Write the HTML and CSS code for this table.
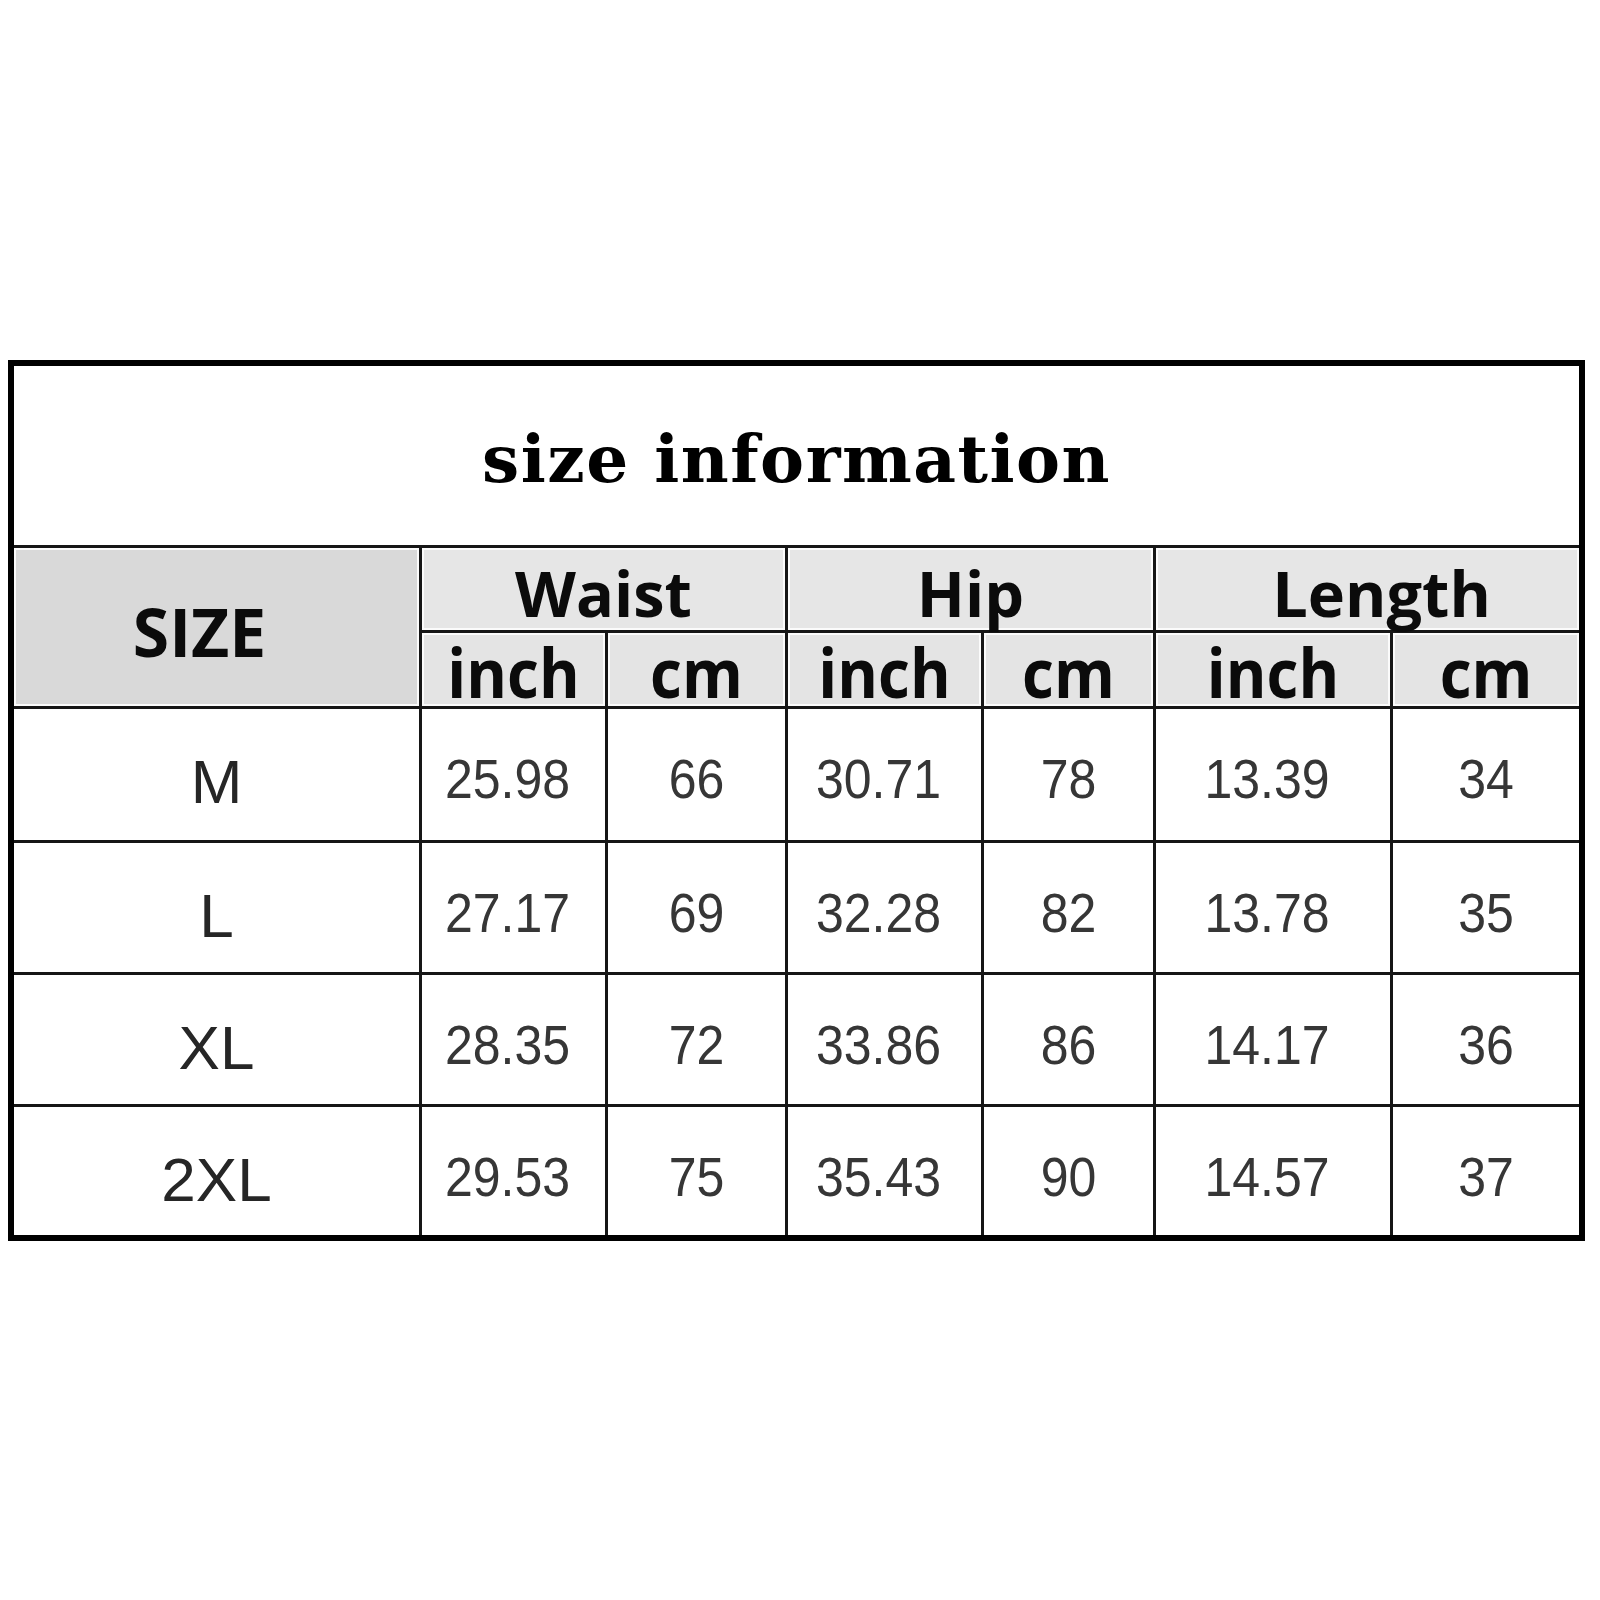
FILE: index.html
```html
<!DOCTYPE html>
<html lang="en">
<head>
<meta charset="utf-8">
<title>size information</title>
<link rel="stylesheet" href="styles.css">
</head>
<body>
<div class="page">
  <table class="chart">
    <colgroup>
      <col class="c-size">
      <col class="c-w-in">
      <col class="c-w-cm">
      <col class="c-h-in">
      <col class="c-h-cm">
      <col class="c-l-in">
      <col class="c-l-cm">
    </colgroup>
    <tr class="r-title">
      <td class="title last-col" colspan="7">size information</td>
    </tr>
    <tr class="r-head1">
      <td class="size-head" rowspan="2"><span class="hs">SIZE</span></td>
      <td class="group" colspan="2"><span class="hg">Waist</span></td>
      <td class="group" colspan="2"><span class="hg">Hip</span></td>
      <td class="group last-col" colspan="2"><span class="hg hg-len">Length</span></td>
    </tr>
    <tr class="r-head2">
      <td class="unit"><span class="hu">inch</span></td>
      <td class="unit"><span class="hu">cm</span></td>
      <td class="unit"><span class="hu">inch</span></td>
      <td class="unit"><span class="hu">cm</span></td>
      <td class="unit"><span class="hu">inch</span></td>
      <td class="unit last-col"><span class="hu">cm</span></td>
    </tr>
    <tr class="r-data r1">
      <td class="sz">M</td>
      <td class="num in"><span class="v">25.98</span></td>
      <td class="num"><span class="v">66</span></td>
      <td class="num in"><span class="v">30.71</span></td>
      <td class="num"><span class="v">78</span></td>
      <td class="num in"><span class="v">13.39</span></td>
      <td class="num last-col"><span class="v">34</span></td>
    </tr>
    <tr class="r-data r2">
      <td class="sz">L</td>
      <td class="num in"><span class="v">27.17</span></td>
      <td class="num"><span class="v">69</span></td>
      <td class="num in"><span class="v">32.28</span></td>
      <td class="num"><span class="v">82</span></td>
      <td class="num in"><span class="v">13.78</span></td>
      <td class="num last-col"><span class="v">35</span></td>
    </tr>
    <tr class="r-data r3">
      <td class="sz">XL</td>
      <td class="num in"><span class="v">28.35</span></td>
      <td class="num"><span class="v">72</span></td>
      <td class="num in"><span class="v">33.86</span></td>
      <td class="num"><span class="v">86</span></td>
      <td class="num in"><span class="v">14.17</span></td>
      <td class="num last-col"><span class="v">36</span></td>
    </tr>
    <tr class="r-data r4 last-row">
      <td class="sz">2XL</td>
      <td class="num in"><span class="v">29.53</span></td>
      <td class="num"><span class="v">75</span></td>
      <td class="num in"><span class="v">35.43</span></td>
      <td class="num"><span class="v">90</span></td>
      <td class="num in"><span class="v">14.57</span></td>
      <td class="num last-col"><span class="v">37</span></td>
    </tr>
  </table>
</div>
</body>
</html>
```

FILE: styles.css
```css
html, body {
  margin: 0;
  padding: 0;
  background: #ffffff;
}

.page {
  padding: 360px 0 0 8px;
}

.chart {
  border-collapse: separate;
  border-spacing: 0;
  border: 6px solid #000;
  table-layout: fixed;
  width: 1577px;
}

.c-size { width: 408px; }
.c-w-in { width: 186px; }
.c-w-cm { width: 180px; }
.c-h-in { width: 196px; }
.c-h-cm { width: 172px; }
.c-l-in { width: 237px; }
.c-l-cm { width: 186px; }

.chart td {
  padding: 0;
  border-right: 3px solid #161616;
  border-bottom: 3px solid #161616;
  text-align: center;
  vertical-align: top;
  line-height: 1;
}

.chart td.last-col { border-right: none; }
.chart tr.last-row td { border-bottom: none; }

.r-title { height: 182px; }
.r-head1 { height: 85px; }
.r-head2 { height: 76px; }
.r1 { height: 134px; }
.r2 { height: 132px; }
.r3 { height: 132px; }
.r4 { height: 128px; }

/* title */
.title {
  font-family: "DejaVu Serif", "Liberation Serif", serif;
  font-weight: bold;
  font-size: 66px;
  color: #000;
  padding-top: 60px !important;
  letter-spacing: 1.5px;
}

/* header cells */
.size-head {
  background: #d9d9d9;
  box-shadow: inset 0 0 0 2px #fbfbfb;
  padding: 50px 34px 0 0 !important;
}

.group {
  background: #e6e6e6;
  box-shadow: inset 0 0 0 2px #fbfbfb;
  vertical-align: bottom !important;
  padding-bottom: 6px !important;
}

.unit {
  background: #e4e4e4;
  box-shadow: inset 0 0 0 2px #fbfbfb;
  vertical-align: bottom !important;
}

.hs, .hg, .hu {
  display: inline-block;
  font-family: "Open Sans", "Noto Sans", sans-serif;
  font-weight: bold;
  color: #0b0b0b;
}

.hs {
  font-size: 66px;
}

.hg {
  font-size: 63px;
}

.hg-len {
  margin-left: 28px;
}

.hu {
  font-size: 62px;
  transform: scaleY(1.1);
  transform-origin: center bottom;
}

/* data */
.sz {
  font-family: "Liberation Sans", Arial, sans-serif;
  font-size: 62px;
  color: #262626;
  padding-top: 42px !important;
}

.num {
  font-family: "Liberation Sans", Arial, sans-serif;
  font-size: 50px;
  color: #363636;
  padding-top: 48px !important;
}

.num.in {
  padding-right: 12px !important;
}

.v {
  display: inline-block;
  transform: scaleY(1.12);
  transform-origin: center bottom;
}
```
